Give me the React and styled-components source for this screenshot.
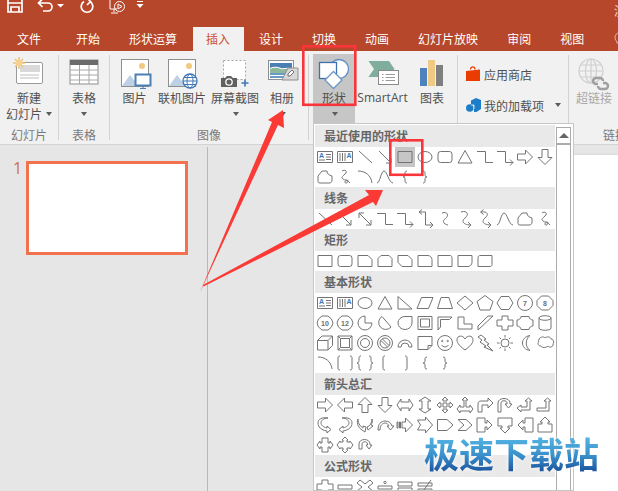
import React from 'react';
import styled, { createGlobalStyle } from 'styled-components';

const cjk = '"Noto Sans CJK SC", "Noto Sans", sans-serif';

const Global = createGlobalStyle`
  html, body { margin: 0; padding: 0; background: #fff; }
  body { font-family: ${cjk}; }
`;

const Frame = styled.div`
  position: relative; width: 618px; height: 491px; overflow: hidden;
  display: flex; flex-direction: column; background: #e6e6e6;
`;
const TitleBar = styled.div`
  height: 27px; flex: none; background: #b7472a; display: grid; grid-template-columns: 614px 1fr;
  overflow: hidden;
`;
const Qat = styled.div`display: flex; align-items: flex-start;`;
const QatIcon = styled.svg`
  flex: none; margin-left: ${p => p.$gap}px; overflow: visible; display: block;
  fill: none; stroke: #fff; stroke-width: ${p => p.$thin ? 1 : 1.7};
`;
const DocName = styled.span`
  font-size: 12px; line-height: 22px; color: #f3d4c9; white-space: nowrap;
`;
const TabBar = styled.div`
  height: 24px; flex: none; background: #b7472a; display: flex; gap: 2px; padding-left: 3.5px;
  overflow: hidden;
`;
const Tab = styled.div`
  flex: none; padding: 0 13.5px; font-size: 12px; line-height: 23px; white-space: nowrap;
  color: ${p => (p.$active ? '#cf4f2f' : '#fff')};
  background: ${p => (p.$active ? '#f1f1f1' : 'transparent')};
  margin-right: ${p => p.$after || 0}px;
`;
const Bulb = styled.svg`flex: none; margin: 5px 0 0 14px; fill: none; stroke: #e8b9a8; stroke-width: 1;`;

const Ribbon = styled.div`
  height: 93px; flex: none; background: #f1f1f1; display: flex; border-bottom: 1px solid #d4d4d4;
`;
const Group = styled.div`
  flex: none; width: ${p => p.$w}px; display: flex; flex-direction: column; padding-top: 3px; box-sizing: border-box;
`;
const GroupBody = styled.div`
  height: 70px; display: flex; gap: ${p => p.$gap || 0}px; padding-left: ${p => p.$pad || 0}px;
`;
const GroupLabel = styled.div`
  margin-top: 3px; font-size: 12px; line-height: 16px; text-align: center; color: #7a7a7a; white-space: nowrap;
`;
const Sep = styled.div`flex: none; width: 1px; margin: 4px 0; background: #d2d2d2;`;
const BigButton = styled.div`
  flex: none; width: ${p => p.$w}px; height: 70px; display: flex; flex-direction: column; align-items: center;
  background: ${p => (p.$on ? '#c6c6c6' : 'transparent')};
  color: ${p => (p.$off ? '#a8a8a8' : '#505050')};
`;
const IconBox = styled.svg`flex: none; display: block; overflow: visible;`;
const Label = styled.div`
  font-size: 12px; line-height: 16px; white-space: nowrap; display: flex; align-items: center; gap: 4px;
  font-family: ${p => (p.$latin ? '"Open Sans", "Liberation Sans", sans-serif' : cjk)};
`;
const Caret = styled.i`
  display: inline-block; width: 0; height: 0; border: 3.5px solid transparent; border-top: 4px solid #5c5c5c; border-bottom: 0;
  margin-left: ${p => p.$shift || 0}px;
`;
const CaretLine = styled.div`height: 16px; display: flex; align-items: center;`;
const AddinStack = styled.div`display: flex; flex-direction: column; gap: 7px; padding: 8px 0 0 8px;`;
const AddinRow = styled.div`
  height: 24px; display: flex; align-items: center; gap: 3px; font-size: 12px; color: #505050; white-space: nowrap;
`;
const AddinCaret = styled.span`margin-left: 8px; display: flex;`;

const Workspace = styled.div`flex: 1; display: flex; min-height: 0;`;
const ThumbPane = styled.div`
  flex: none; width: 208px; box-sizing: border-box; border-right: 1px solid #b9b9b9; margin-top: 2px;
  padding: 14px 0 0 13px; display: flex; align-items: flex-start;
`;
const SlideNo = styled.div`
  width: 13px; font: 16px/14px "Open Sans", "Liberation Sans", sans-serif; color: #d2704f;
`;
const Thumb = styled.div`
  width: 162px; height: 94px; box-sizing: border-box; background: #fff; border: 3px solid #f2714f;
`;
const Editor = styled.div`flex: 1; padding: 10px 0 0 120px; min-width: 0;`;
const Canvas = styled.div`width: 100%; height: 100%; background: #fff; box-shadow: 0 0 3px #cfcfcf;`;

const Gallery = styled.div`
  position: absolute; left: 313px; top: 123px; width: 261px; height: 368px; box-sizing: border-box;
  border: 1px solid #c6c6c6; padding: 1px 2px 0 1px; background: #fff; display: flex; overflow: hidden;
`;
const GalleryList = styled.div`flex: none; width: 240px;`;
const SectionTitle = styled.div`
  height: 22px; padding-left: 9px; background: #e9e9e9; font-size: 12px; line-height: 21px; font-weight: 700; color: #666;
`;
const ShapeGrid = styled.div`display: grid; grid-template-columns: repeat(12, 20px); grid-auto-rows: 20px;`;
const ShapeCell = styled.div`
  width: 20px; height: 20px; background: ${p => (p.$on ? '#c6c6c6' : 'transparent')};
`;
const ShapeSvg = styled.svg`
  display: block; fill: none; stroke: #747474; stroke-width: 1;
  text { fill: #6e6e6e; stroke: none; font: 700 7px "Liberation Sans", sans-serif; text-anchor: middle; }
  .blue { fill: #3f78bd; }
`;
const ScrollBar = styled.div`
  flex: none; width: 15px; margin-left: 1px; box-sizing: border-box; border: solid #ababab; border-width: 0 1px;
  background: #fff; margin-top: 2px;
`;
const ScrollUp = styled.div`
  height: 15px; border-top: 1px solid #ababab; border-bottom: 2px solid #ababab; display: flex; align-items: center; justify-content: center;
`;
const ScrollTri = styled.i`
  width: 0; height: 0; border: 5px solid transparent; border-bottom: 5px solid #666; border-top: 0;
`;

const Annotations = styled.svg`position: absolute; left: 0; top: 0; pointer-events: none;`;
const Watermark = styled.div`
  position: absolute; left: 424px; top: 427px; font-size: 35px; line-height: 52px; font-weight: 700; white-space: nowrap;
  background: linear-gradient(180deg, #55b6e4 18%, #3a8fca 55%, #1c569f 85%);
  -webkit-background-clip: text; background-clip: text; color: transparent;
  filter: drop-shadow(0 0 2px rgba(255,255,255,.9));
`;

/* ---------- gallery shape drawings ---------- */
const circle = (cx, cy, r) => `M${cx - r} ${cy}a${r} ${r} 0 1 0 ${2 * r} 0a${r} ${r} 0 1 0 ${-2 * r} 0z`;
const P = {
  line: 'M4 4L17 16',
  lineArrow: 'M4 4L16 16M16 11v5h-5',
  dbl: 'M4 4L16 16M16 11v5h-5M4 9V4h5',
  rect: 'M3 4.5h14v11H3z',
  ellipse: 'M3 10a7 5.5 0 1 0 14 0a7 5.5 0 1 0-14 0z',
  round: 'M5.5 4.5h9a2.5 2.5 0 0 1 2.5 2.5v6a2.5 2.5 0 0 1-2.5 2.5h-9a2.5 2.5 0 0 1-2.5-2.5v-6a2.5 2.5 0 0 1 2.5-2.5z',
  tri: 'M10 3.5L17 16H3z',
  elbow: 'M2 4.5h8.5v11H18',
  elbowA: 'M2 4.5h8.5v11H18M15 12.5l3 3-3 3',
  elbowD: 'M4 3h6.5v13H18M15 13l3 3-3 3M7 .5L4 3l3 2.5',
  right: 'M2.5 7h8V3l7 7-7 7v-4h-8z',
  left: 'M17.5 7h-8V3l-7 7 7 7v-4h8z',
  up: 'M7 17.5v-8H3l7-7 7 7h-4v8z',
  down: 'M7 2.5h6v8h4l-7 7-7-7h4z',
  free: 'M3 9L7 4h5c0 3 2 4 5 5v4c0 2-1 3-3 3H5c-2 0-2-1-2-3z',
  scrib: 'M7 4c3-2 6 0 3 3s-4 3-2 5 5 0 5 2-3 3-3 1 3-2 5 1',
  arc: 'M3 4c7 0 13 4 14 12',
  wave: 'M2 16C5 16 6 4 9 4s5 12 9 12',
  bl: 'M12 4c-2 0-2 1-2 3s0 3-2 3c2 0 2 1 2 3s0 3 2 3',
  br: 'M8 4c2 0 2 1 2 3s0 3 2 3c-2 0-2 1-2 3s0 3-2 3',
  s: 'M7 4c6-2 7 3 3.500 5.500S8 15 13 16',
  sA: 'M6 3c7-2 8 3 4 6s-2 7 6 7M13 13l3 3-3 3',
  sD: 'M6 3c7-1 8 3 4 6s-2 7 6 7M13 13l3 3-3 3M8.500 .5L5.500 3l3 2.500',
  snip1: 'M3 4.5h10l4 4v7H3z',
  snip2: 'M6 4.5h8l3 3v8H3v-8z',
  snipD: 'M3 4.5h10l4 4v7H7l-4-4z',
  rnd1: 'M3 4.5h10c2 0 4 2 4 4v7H3z',
  rnd3: 'M3 4.5h12c1 0 2 1 2 2v9H3z',
  rnd2: 'M3 4.5h14v7c0 2-2 4-4 4H3z',
  rnd4: 'M5 4.5h12v9c0 1-1 2-2 2H3v-9c0-1 1-2 2-2z',
  rtri: 'M3 3.500L17 16H3z',
  para: 'M6.500 4.500H18L13.500 15.500H2z',
  trap: 'M6 4.500h8L17.500 15.500H2.500z',
  dia: 'M10 3L18 10L10 17L2 10z',
  penta: 'M10 2.500L18 8.500L15 17H5L2 8.500z',
  hexa: 'M6 3.500h8L18 10l-4 6.500H6L2 10z',
  oct: 'M6.500 3h7L18 7.500v5L13.500 17h-7L2 12.500v-5z',
  deca: 'M7 3h6l3.500 3L18 10l-1.500 4L13 17H7l-3.500-3L2 10l1.500-4z',
  pie: 'M10 3a7 7 0 1 0 7 7h-7z',
  chord: 'M7 3.500L16 14A7 7 0 1 1 7 3.500z',
  tear: 'M17 3.500h-7a7 6.500 0 1 0 7 6.500z',
  frame: 'M3 3.500h14v13H3zM5.500 6h9v8h-9z',
  half: 'M3 4h14l-2.500 2.500H5.500V14L3 17z',
  ell: 'M3 4h6v7h8v5H3z',
  stripe: 'M3 13L13 3h5L3 17z',
  cross: 'M7 3h6v4h5v6h-5v4H7v-4H2V7h5z',
  plaque: 'M6 3.500h8c0 2 2 3.500 4 3.500v6c-2 0-4 1.500-4 3.500H6c0-2-2-3.500-4-3.500V7c2 0 4-1.500 4-3.500z',
  can: 'M4 5c0-3 12-3 12 0v10c0 3-12 3-12 0zM4 5c0 3 12 3 12 0',
  cube: 'M2.500 7.500L7 3h10.500v9.500L13 17H2.500zM2.500 7.500H13V17M13 7.500L17.500 3',
  bevel: 'M3 3h14v14H3zM5.500 5.500h9v9h-9zM3 3l2.500 2.500M17 3l-2.500 2.500M3 17l2.500-2.500M17 17l-2.500-2.500',
  donut: circle(10, 10, 7.5) + circle(10, 10, 4.5),
  no: circle(10, 10, 7.5) + circle(10, 10, 5) + 'M6 7.500L12.500 14M7.500 6L14 12.500',
  block: 'M3 14a7 7 0 0 1 14 0h-3a4 4 0 0 0-8 0z',
  fold: 'M3 3.500h14v9l-4 4H3zM17 12.500h-4v4',
  smile: circle(10, 10, 7.5) + circle(7.300, 8, .7) + circle(12.700, 8, .7) + 'M6.500 12c2 2.500 5 2.500 7 0',
  heart: 'M10 17C3 12 2 9 2 7c0-5 6-5 8-1 2-4 8-4 8 1 0 2-1 5-8 10z',
  bolt: 'M6 2l5 4-2 1 5 4-2 1 6 6-9-4 2-1-6-4 2-2-4-3z',
  sun: circle(10, 10, 4) + 'M10 2v2.500M10 15.500V18M2 10h2.500M15.500 10H18M4.500 4.500l1.500 1.500M14 14l1.500 1.500M4.500 15.500L6 14M14 6l1.500-1.500',
  moon: 'M15 2.500C5 4 5 16 15 17.500 10 14 10 6 15 2.500z',
  cloud: 'M4 7c0-3 5-4 6-2 2-2 6-1 6 1 3 0 3 4 2 5 1 3-4 4-5 2-2 2-6 2-7 0-3 0-4-3-2-4-1-1-1-2 0-2z',
  brP: 'M5 3c-2 0-2 1-2 2v10c0 1 0 2 2 2M15 3c2 0 2 1 2 2v10c0 1 0 2-2 2',
  brcP: 'M6 3c-2 0-2 1-2 3s0 4-2 4c2 0 2 2 2 4s0 3 2 3M14 3c2 0 2 1 2 3s0 4 2 4c-2 0-2 2-2 4s0 3-2 3',
  bkL: 'M10 3c-2 0-2 1-2 2v10c0 1 0 2 2 2',
  bkR: 'M10 3c2 0 2 1 2 2v10c0 1 0 2-2 2',
  lr: 'M2 10l4-6v3h8V4l4 6-4 6v-3H6v3z',
  ud: 'M10 2l6 4h-3v8h3l-6 4-6-4h3V6H4z',
  quad: 'M10 2l3 3h-2v4h4V7l3 3-3 3v-2h-4v4h2l-3 3-3-3h2v-4H5v2l-3-3 3-3v2h4V5H7z',
  lru: 'M10 2l3 3h-2v7h4v-2l3 4-3 4v-2H5v2l-3-4 3-4v2h4V5H7z',
  bent: 'M3 17V9c0-2 1-3 3-3h7V3l5 5-5 5v-3H7v7z',
  uturn: 'M3 17V8c0-6 12-6 12 0v1h2l-3.500 4L10 9h2V8c0-3-6-3-6 0v9z',
  lup: 'M2 13l4-3v2h6V6h-2l3.500-3L17 6h-2v9H6v2z',
  bup: 'M2 13h9V6H9l3.500-3L16 6h-2v10H2z',
  cR: 'M13 3C8 3 6 6 6 8s2 4 6 5v-2l4 3.500-4 3.500v-2C6 15 3 12 3 8s4-6 10-5z',
  cL: 'M7 3c5 0 7 3 7 5s-2 4-6 5v-2l-4 3.500L8 18v-2c6-1 9-4 9-8S13 2 7 3z',
  cU: 'M3 4c0 5 3 8 5 9v-2l3 1-1 5-3-2c-3-2-6-6-4-11zM17 4c0 4-2 7-5 8l1 3 5-4-2-1c1-2 2-4 1-6z',
  cD: 'M3 15c0-6 3-9 7-9s6 2 7 5h2l-3.500 4L12 11h2c-1-2-2-3-4-3s-5 2-5 7z',
  stri: 'M2 7h1v6H2zM4.500 7h1v6h-1zM7 7h3.500V3l7 7-7 7v-4H7z',
  notch: 'M2.500 5h8V2l7 8-7 8v-3h-8l3-5z',
  home: 'M2.500 4.500H12L18 10l-6 5.500H2.500z',
  chev: 'M3 4.500h8L17 10l-6 5.500H3L9 10z',
  callR: 'M2 3h8v5h2V5l5 5-5 5v-3h-2v5H2z',
  callD: 'M3 3h14v8h-4v2h2l-5 5-5-5h2v-2H3z',
  callL: 'M18 3h-8v5H8V5l-5 5 5 5v-3h2v5h8z',
  callU: 'M3 17h14V9h-4V7h2l-5-5-5 5h2v2H3z',
  callLR: 'M7 3h6v5h2V6l3 4-3 4v-2h-2v5H7v-5H5v2l-3-4 3-4v2h2z',
  callQ: 'M10 2l3 3h-1v2h3V6l3 4-3 4v-1h-3v2h1l-3 3-3-3h1v-2H5v1l-3-4 3-4v1h3V5H7z',
  circ: 'M4 14V9c0-6 11-6 11 0v1h2l-3 4-3-4h1.500V9c0-3-5.500-3-5.500 0v5z',
  minus: 'M3 8h14v4H3z',
  times: 'M5 3l5 4 5-4 3 3-5 4 5 4-3 3-5-4-5 4-3-3 5-4-5-4z',
  divide: 'M3 9h14v3H3z' + circle(10, 5.500, 1.200) + circle(10, 15.500, 1.200),
  equal: 'M3 5h14v4H3zM3 11h14v4H3z',
  neq: 'M3 6h14v3H3zM3 12h14v3H3zM6 17L16 3',
};

const Shape = ({ n, on }) => {
  let body;
  if (n === 'tb') {
    body = <><path d="M2.500 4.500h15v11h-15z" /><text className="blue" x="6.500" y="11">A</text><path d="M11 7.500h5M11 10h5M11 12.500h5M4 13h6" /></>;
  } else if (n === 'vtb') {
    body = <><path d="M2.500 4.500h15v11h-15zM5 6v8M7.500 6v8M10 6v8" /><text className="blue" x="14" y="11">A</text></>;
  } else if (n === 'c7') {
    body = <><path d={circle(10, 10, 7.5)} /><text x="10" y="12.500">7</text></>;
  } else if (n === 'o8') {
    body = <><path d={P.oct} /><text x="10" y="12.500">8</text></>;
  } else if (n === 'd10') {
    body = <><path d={P.deca} /><text x="10" y="12.500">10</text></>;
  } else if (n === 'd12') {
    body = <><path d={P.deca} /><text x="10" y="12.500">12</text></>;
  } else {
    body = <path d={P[n]} />;
  }
  return (
    <ShapeCell $on={on}>
      <ShapeSvg width="20" height="20" viewBox="0 0 20 20">{body}</ShapeSvg>
    </ShapeCell>
  );
};

const sections = [
  ['最近使用的形状', ['tb', 'vtb', 'line', 'lineArrow', 'rect*', 'ellipse', 'round', 'tri', 'elbow', 'elbowA', 'right', 'down', 'free', 'scrib', 'arc', 'wave', 'bl', 'br']],
  ['线条', ['line', 'lineArrow', 'dbl', 'elbow', 'elbowA', 'elbowD', 's', 'sA', 'sD', 'wave', 'free', 'scrib']],
  ['矩形', ['rect', 'round', 'snip1', 'snip2', 'snipD', 'rnd1', 'rnd3', 'rnd2', 'rnd4']],
  ['基本形状', ['tb', 'vtb', 'ellipse', 'tri', 'rtri', 'para', 'trap', 'dia', 'penta', 'hexa', 'c7', 'o8', 'd10', 'd12', 'pie', 'chord', 'tear', 'frame', 'half', 'ell', 'stripe', 'cross', 'plaque', 'can', 'cube', 'bevel', 'donut', 'no', 'block', 'fold', 'smile', 'heart', 'bolt', 'sun', 'moon', 'cloud', 'arc', 'brP', 'brcP', 'bkL', 'bkR', 'bl', 'br']],
  ['箭头总汇', ['right', 'left', 'up', 'down', 'lr', 'ud', 'quad', 'lru', 'bent', 'uturn', 'lup', 'bup', 'cR', 'cL', 'cU', 'cD', 'stri', 'notch', 'home', 'chev', 'callR', 'callD', 'callL', 'callU', 'callLR', 'callQ', 'circ']],
  ['公式形状', ['cross', 'minus', 'times', 'divide', 'equal', 'neq']],
];

/* ---------- ribbon icons ---------- */
const NewSlideIcon = () => (
  <IconBox width="36" height="36" viewBox="0 0 36 36">
    <rect x="5.500" y="8.500" width="26" height="21" rx="1.500" fill="#fff" stroke="#9a9a9a" />
    <rect x="9" y="11" width="20" height="7" fill="#d9d9d9" />
    <path d="M9 21h19M9 24h19" stroke="#bdbdbd" />
    <path d="M8 3v12M2 9h12M4 5l8 8M12 5l-8 8" stroke="#f0c272" strokeWidth="1.500" />
    <circle cx="8" cy="9" r="3.200" fill="#f6d28f" />
  </IconBox>
);
const TableIcon = () => (
  <IconBox width="36" height="36" viewBox="0 0 36 36">
    <rect x="4" y="6" width="28" height="24" fill="#fff" stroke="#8f8f8f" />
    <rect x="4" y="6" width="28" height="5" fill="#6b6b6b" />
    <path d="M4 16h28M4 21h28M4 26h28M13.500 11v19M23 11v19" stroke="#a8a8a8" />
  </IconBox>
);
const Photo = () => (
  <>
    <rect x="4.500" y="5.500" width="27" height="27" fill="#fff" stroke="#8f8f8f" />
    <path d="M5 32L13 21l9 11z" fill="#bcd0e6" />
    <circle cx="25" cy="12" r="3" fill="#f2c97f" />
  </>
);
const PictureIcon = () => (
  <IconBox width="36" height="36" viewBox="0 0 36 36">
    <Photo />
    <rect x="18.500" y="20.500" width="15" height="11" fill="#fff" stroke="#4d7fb5" strokeWidth="2" />
    <path d="M26 32v2M23 34.500h6" stroke="#4d7fb5" />
  </IconBox>
);
const OnlinePictureIcon = () => (
  <IconBox width="36" height="36" viewBox="0 0 36 36">
    <Photo />
    <circle cx="26" cy="27" r="7" fill="#fff" stroke="#3f78b5" strokeWidth="1.300" />
    <ellipse cx="26" cy="27" rx="3" ry="7" fill="none" stroke="#3f78b5" />
    <path d="M19 27h14M20 23.500h12M20 30.500h12" stroke="#3f78b5" />
  </IconBox>
);
const ScreenshotIcon = () => (
  <IconBox width="36" height="36" viewBox="0 0 36 36">
    <rect x="6.500" y="6.500" width="22" height="19" fill="#fff" stroke="#a8a8a8" strokeDasharray="2 2" />
    <path d="M4 33V24h4l2-2h4l2 2h4v9z" fill="#606060" />
    <circle cx="12" cy="28" r="3.200" fill="#606060" stroke="#fff" strokeWidth="1.300" />
    <path d="M28 25.500v7M24.500 29h7" stroke="#3f78b5" strokeWidth="1.600" />
  </IconBox>
);
const AlbumIcon = () => (
  <IconBox width="36" height="36" viewBox="0 0 36 36">
    <rect x="4.500" y="6.500" width="25" height="19" fill="#fff" stroke="#8f8f8f" />
    <path d="M6 9h22v6c-4-3-8 0-11-1s-7-2-11 0z" fill="#4a7fb3" />
    <path d="M6 15c4-2 8-1 11 0s7-2 11 1v3H6z" fill="#8db89a" />
    <path d="M6 19h22v2H6zM6 22h16v2H6z" fill="#6a9ac6" />
    <path d="M24 14l10 0v12H18z" fill="#d8d8d8" stroke="#8f8f8f" />
    <path d="M24 20l4-4 2 2-4 4h-2z" fill="#fff" stroke="#6e6e6e" />
  </IconBox>
);
const ShapesIcon = () => (
  <IconBox width="36" height="36" viewBox="0 0 36 36">
    <circle cx="23" cy="15" r="9.500" fill="#fff" stroke="#5f8fc4" strokeWidth="1.300" />
    <rect x="3.500" y="8.500" width="17" height="16" fill="#fff" stroke="#3e72ad" strokeWidth="1.300" />
    <path d="M17.500 17.500L26 26l-8.500 8.500L9 26z" fill="#fff" stroke="#6b97c9" strokeWidth="1.300" />
  </IconBox>
);
const SmartArtIcon = () => (
  <IconBox width="36" height="36" viewBox="0 0 36 36">
    <path d="M3.500 7H24l5.500 8-5.500 8H3.500l5.500-8z" fill="#7fae9d" />
    <rect x="13.500" y="16.500" width="20" height="14" fill="#fff" stroke="#8a8a8a" />
    <path d="M17 20.500h1.500M20.500 20.500H30M17 23.500h1.500M20.500 23.500H30M17 26.500h1.500M20.500 26.500H30" stroke="#9a9a9a" />
  </IconBox>
);
const ChartIcon = () => (
  <IconBox width="36" height="36" viewBox="0 0 36 36">
    <rect x="6" y="14" width="7" height="18" fill="#4f81bd" />
    <rect x="14" y="6" width="7" height="26" fill="#f0ca82" />
    <rect x="22" y="11" width="7" height="21" fill="#7f7f7f" />
  </IconBox>
);
const LinkIcon = () => (
  <IconBox width="36" height="36" viewBox="0 0 36 36">
    <g fill="none" stroke="#cfcfcf" strokeWidth="1.200">
      <circle cx="15" cy="17" r="12" />
      <ellipse cx="15" cy="17" rx="5.500" ry="12" />
      <path d="M3 17h24M5 11h20M5 23h20M15 5v24" />
    </g>
    <path d="M22 30h-2a3 3 0 0 1 0-6h4a3 3 0 0 1 3 3M27 29h2a3 3 0 0 1 0 6h-4a3 3 0 0 1-3-3" fill="none" stroke="#a0a0a0" strokeWidth="2.400" />
  </IconBox>
);
const StoreIcon = () => (
  <IconBox width="15" height="16" viewBox="0 0 15 16">
    <path d="M4.500 3.500c0-3.500 4.500-3.500 4.500 0" fill="none" stroke="#eb3c00" strokeWidth="1.200" />
    <path d="M0 5l14-1.500V15H0z" fill="#eb3c00" />
  </IconBox>
);
const AddinIcon = () => (
  <IconBox width="15" height="16" viewBox="0 0 15 16">
    <path d="M5 3.500L10 1l5 2v9l-4.500 3H8V8H5z" fill="#1c7ec8" />
    <circle cx="3.800" cy="11" r="3.800" fill="#1c7ec8" />
    <path d="M5 8h3v4" fill="none" stroke="#f1f1f1" strokeWidth=".8" />
  </IconBox>
);

const App = () => (
  <Frame>
    <Global />
    <TitleBar>
      <Qat>
        <QatIcon $gap={7} width="16" height="13" viewBox="0 0 16 13">
          <path d="M1 -2V12H15V-2M4 12V7h8v5M1 3h14" />
        </QatIcon>
        <QatIcon $gap={14} width="18" height="13" viewBox="0 0 18 13">
          <path d="M2 3h9a4 4 0 0 1 0 8H6M5.500 -1L1.500 3l4 4" />
        </QatIcon>
        <QatIcon $gap={2} width="8" height="10" viewBox="0 0 8 10">
          <path d="M0 4h7L3.500 7.500z" fill="#fff" stroke="none" />
        </QatIcon>
        <QatIcon $gap={15} width="14" height="13" viewBox="0 0 14 13">
          <path d="M4 1.500a5.800 5.800 0 1 0 6 0M7 -2l3.500 3.500L7 5" />
        </QatIcon>
        <QatIcon $gap={15} $thin width="17" height="16" viewBox="0 0 17 16">
          <path d="M1 -1v10h7M5 9v3M2 13h7" />
          <circle cx="10.500" cy="6.500" r="5" />
          <path d="M9 4l4 2.500L9 9z" />
        </QatIcon>
        <QatIcon $gap={10} $thin width="8" height="10" viewBox="0 0 8 10">
          <path d="M1 1.500h6" />
          <path d="M.5 4h7L4 8z" fill="#fff" stroke="none" />
        </QatIcon>
      </Qat>
      <DocName>演示文稿1 - PowerPoint</DocName>
    </TitleBar>

    <TabBar>
      <Tab $after={6}>文件</Tab>
      <Tab>开始</Tab>
      <Tab>形状运算</Tab>
      <Tab $active>插入</Tab>
      <Tab>设计</Tab>
      <Tab>切换</Tab>
      <Tab>动画</Tab>
      <Tab>幻灯片放映</Tab>
      <Tab>审阅</Tab>
      <Tab>视图</Tab>
      <Bulb width="12" height="16" viewBox="0 0 12 16">
        <path d="M3 11c0-2-2-3-2-5.500a5 5 0 0 1 10 0C11 8 9 9 9 11zM4 13h4M5 15h2" />
      </Bulb>
    </TabBar>

    <Ribbon>
      <Group $w={58}>
        <GroupBody>
          <BigButton $w={58}>
            <NewSlideIcon />
            <Label>新建</Label>
            <Label>幻灯片<Caret /></Label>
          </BigButton>
        </GroupBody>
        <GroupLabel>幻灯片</GroupLabel>
      </Group>
      <Sep />
      <Group $w={50}>
        <GroupBody>
          <BigButton $w={50}>
            <TableIcon />
            <Label>表格</Label>
            <CaretLine><Caret /></CaretLine>
          </BigButton>
        </GroupBody>
        <GroupLabel>表格</GroupLabel>
      </Group>
      <Sep />
      <Group $w={198}>
        <GroupBody $pad={4} $gap={1}>
          <BigButton $w={41}>
            <PictureIcon />
            <Label>图片</Label>
          </BigButton>
          <BigButton $w={52}>
            <OnlinePictureIcon />
            <Label>联机图片</Label>
          </BigButton>
          <BigButton $w={52}>
            <ScreenshotIcon />
            <Label>屏幕截图</Label>
            <CaretLine><Caret $shift={2} /></CaretLine>
          </BigButton>
          <BigButton $w={40}>
            <AlbumIcon />
            <Label>相册</Label>
            <CaretLine><Caret $shift={2} /></CaretLine>
          </BigButton>
        </GroupBody>
        <GroupLabel>图像</GroupLabel>
      </Group>
      <Sep />
      <Group $w={148}>
        <GroupBody $pad={4}>
          <BigButton $w={42} $on>
            <ShapesIcon />
            <Label>形状</Label>
            <CaretLine><Caret $shift={1} /></CaretLine>
          </BigButton>
          <BigButton $w={55}>
            <SmartArtIcon />
            <Label $latin>SmartArt</Label>
          </BigButton>
          <BigButton $w={44}>
            <ChartIcon />
            <Label>图表</Label>
          </BigButton>
        </GroupBody>
      </Group>
      <Sep />
      <Group $w={110}>
        <AddinStack>
          <AddinRow><StoreIcon />应用商店</AddinRow>
          <AddinRow>
            <AddinIcon />我的加载项
            <AddinCaret><Caret /></AddinCaret>
          </AddinRow>
        </AddinStack>
      </Group>
      <Sep />
      <Group $w={92}>
        <GroupBody>
          <BigButton $w={50} $off>
            <LinkIcon />
            <Label>超链接</Label>
          </BigButton>
        </GroupBody>
        <GroupLabel>链接</GroupLabel>
      </Group>
    </Ribbon>

    <Workspace>
      <ThumbPane>
        <SlideNo>1</SlideNo>
        <Thumb />
      </ThumbPane>
      <Editor><Canvas /></Editor>
    </Workspace>

    <Gallery>
      <GalleryList>
        {sections.map(([title, items]) => (
          <React.Fragment key={title}>
            <SectionTitle>{title}</SectionTitle>
            <ShapeGrid>
              {items.map((it, i) => (
                <Shape key={i} n={it.replace('*', '')} on={it.endsWith('*')} />
              ))}
            </ShapeGrid>
          </React.Fragment>
        ))}
      </GalleryList>
      <ScrollBar>
        <ScrollUp><ScrollTri /></ScrollUp>
      </ScrollBar>
    </Gallery>

    <Annotations width="618" height="491" viewBox="0 0 618 491">
      <g fill="#fb3a36">
        <path d="M200 292L272 122L268 120L283 110L284 128L278 125L202 288z" />
        <path d="M203 285L369 195L365 190L383 190L376 206L373 202L203.500 286.500z" />
      </g>
      <g fill="none" stroke="#f9353a" strokeWidth="2.600">
        <rect x="303.300" y="46.300" width="52" height="58.500" />
        <rect x="390.300" y="140.300" width="32" height="34.500" />
      </g>
    </Annotations>
    <Watermark>极速下载站</Watermark>
  </Frame>
);

export default App;
